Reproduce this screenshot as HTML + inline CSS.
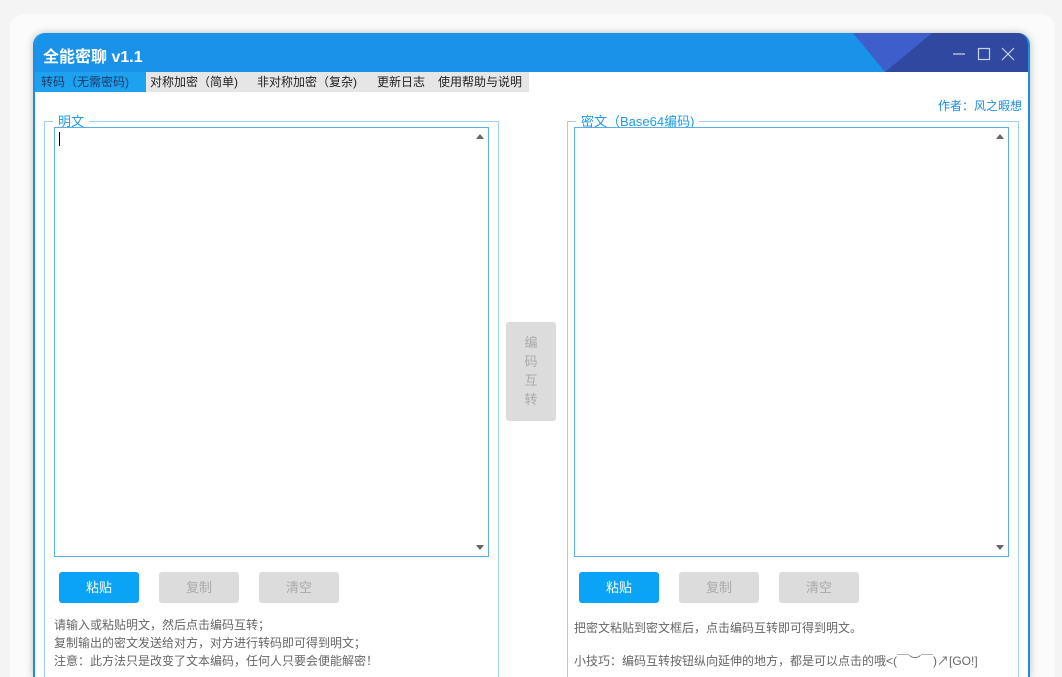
<!DOCTYPE html>
<html style="width:1062px;height:677px;overflow:hidden"><head><meta charset="utf-8"><style>
*{margin:0;padding:0;box-sizing:border-box}
body{width:1062px;height:677px;background:#f4f4f4;position:relative;overflow:hidden;font-family:"Liberation Sans","Noto Sans CJK SC",sans-serif;}
.bg{position:absolute;left:10px;top:14px;width:1045px;height:663px;background:#fbfbfb;border-radius:14px 14px 0 0;}
.win{position:absolute;left:33px;top:33px;width:997px;height:644px;background:#fff;border-radius:12px 12px 0 0;overflow:hidden;border-left:2px solid #1a8de6;border-right:2px solid #1a8de6;box-shadow:0 0 8px rgba(0,0,0,.25)}
.title{position:absolute;left:0;top:0;width:100%;height:39px;background:#1992ea;}
.title .t{position:absolute;left:8px;top:10px;color:#fff;font-size:16px;font-weight:bold}
.tabs{position:absolute;left:0;top:39px;width:100%;height:20px;}
.tab{position:absolute;top:0;height:20px;font-size:12px;line-height:21px;color:#222;background:#e6e6e6;padding-left:6px}
.a{position:absolute;color:#1a8de6;font-size:12px}
.gb{position:absolute;border:1px solid #9fd0ee;border-bottom:none}
.gl{position:absolute;top:-8px;left:8px;background:#fff;color:#1d9be6;font-size:13px;padding:0 5px;line-height:15px}
.ta{position:absolute;border:1px solid #5aaee6;background:#fff}
.sb{position:absolute;right:0;top:0;width:16px;height:100%;}
.up,.dn{position:absolute;left:4px;width:0;height:0;border-left:4px solid transparent;border-right:4px solid transparent}
.up{top:6px;border-bottom:5px solid #666}
.dn{bottom:6px;border-top:5px solid #666}
.btn{position:absolute;width:80px;height:31px;border-radius:3px;background:#dcdcdc;color:#aaa;font-size:13px;text-align:center;line-height:31px}
.btn.b{background:#0aa3f5;color:#fff}
.tx{position:absolute;color:#666;font-size:12px;line-height:18px}
</style></head><body>
<div class="bg"></div>
<div class="win">
 <div class="title"><div class="t">全能密聊 v1.1</div>
  <svg style="position:absolute;left:0;top:0" width="997" height="39"><polygon points="818,0 897,0 850,39" fill="#3e5fcb"/><polygon points="897,0 997,0 997,39 850,39" fill="#30489f"/>
  <g stroke="#c8d2ee" stroke-width="1.2" fill="none"><line x1="918" y1="21" x2="930" y2="21"/><rect x="943.5" y="15.5" width="11" height="11"/><line x1="967" y1="15" x2="979" y2="27"/><line x1="979" y1="15" x2="967" y2="27"/></g></svg>
 </div>
 <div class="tabs">
  <div class="tab" style="left:0;width:111px;background:#1ea2f0;color:#1a3a66">转码（无需密码)</div>
  <div class="tab" style="left:111px;width:383px"><span style="position:absolute;left:4px">对称加密（简单)</span><span style="position:absolute;left:111px">非对称加密（复杂)</span><span style="position:absolute;left:231px">更新日志</span><span style="position:absolute;left:292px">使用帮助与说明</span></div>
 </div>
 <div class="a" style="left:903px;top:64px">作者：风之暇想</div>
 <div class="gb" style="left:9px;top:88px;width:455px;height:556px"><div class="gl">明文</div></div>
 <div class="ta" style="left:19px;top:94px;width:435px;height:430px"><div style="position:absolute;left:4px;top:4px;width:1px;height:14px;background:#000"></div><div class="sb"><div class="up"></div><div class="dn"></div></div></div>
 <div class="gb" style="left:532px;top:88px;width:452px;height:556px"><div class="gl">密文（Base64编码)</div></div>
 <div class="ta" style="left:539px;top:94px;width:435px;height:430px"><div class="sb"><div class="up"></div><div class="dn"></div></div></div>
 <div class="btn b" style="left:24px;top:539px">粘贴</div>
 <div class="btn" style="left:124px;top:539px">复制</div>
 <div class="btn" style="left:224px;top:539px">清空</div>
 <div class="btn b" style="left:544px;top:539px">粘贴</div>
 <div class="btn" style="left:644px;top:539px">复制</div>
 <div class="btn" style="left:744px;top:539px">清空</div>
 <div class="btn" style="left:471px;top:289px;width:50px;height:99px;line-height:19px;padding-top:11px">编<br>码<br>互<br>转</div>
 <div class="tx" style="left:19px;top:583px">请输入或粘贴明文，然后点击编码互转；<br>复制输出的密文发送给对方，对方进行转码即可得到明文；<br>注意：此方法只是改变了文本编码，任何人只要会便能解密！</div>
 <div class="tx" style="left:539px;top:586px">把密文粘贴到密文框后，点击编码互转即可得到明文。</div>
 <div class="tx" style="left:539px;top:619px">小技巧：编码互转按钮纵向延伸的地方，都是可以点击的哦&lt;(￣︶￣)↗[GO!]</div>
</div>
</body></html>
